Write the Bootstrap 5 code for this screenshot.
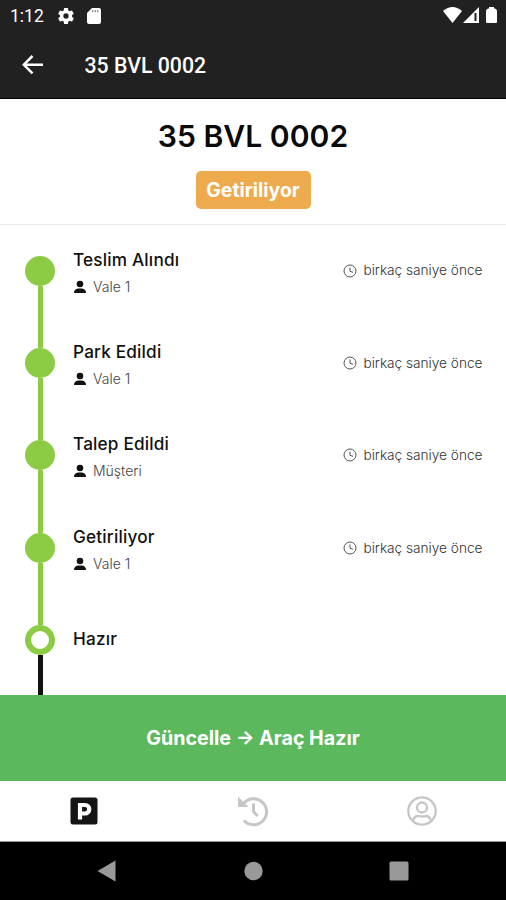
<!DOCTYPE html>
<html lang="tr">
<head>
<meta charset="utf-8">
<meta name="viewport" content="width=device-width, initial-scale=1">
<title>35 BVL 0002</title>
<link href="https://cdn.jsdelivr.net/npm/bootstrap@5.3.0/dist/css/bootstrap.min.css" rel="stylesheet">
<style>
body{font-family:Inter,"Noto Sans",sans-serif;color:#111;background:#fff}
svg{display:block;flex:none}
.screen{height:900px;overflow:hidden}
.app-head{height:98.5px;background:#212121;color:#fff;border-bottom:1px solid #000}
.status{height:32px;padding:0 8px 0 10px;font:400 17.5px/32px Roboto,sans-serif}
.status .gear{margin-left:12px}
.status .sd{margin-left:11px}
.title-row{height:66px;padding-left:20px}
.title-row h1{font:500 21.3px/66px Roboto,sans-serif;margin:1px 0 0 38.5px}
.plate{height:126px;border-bottom:1px solid #ebebeb;padding-top:18px}
.plate h2{font-size:30.1px;font-weight:600;line-height:38px;margin:0 0 16px;color:#0a0a0a}
.state{height:38px;line-height:39px;width:115px;border-radius:5px;background:#eeab4e;color:#fff;font-size:19.4px;font-weight:700}
.step{height:92.4px;padding:0 23.5px 0 25px}
.rail{width:30px}
.rail i{flex:1;width:5px;background:#8ccc44}
.rail i.none{background:none}
.rail i.todo,.tail i{background:#111}
.dot{width:30px;height:30px;border-radius:50%;background:#8ccc44}
.dot.open{background:#fff;border:6px solid #8ccc44}
.info{margin-left:18px;padding-top:3px}
.info.single{padding:0 0 2px}
.name{font-size:17.2px;letter-spacing:.18px;font-weight:500;line-height:22px}
.who{font-size:14px;font-weight:300;line-height:18px;margin-top:7px;color:#444}
.who svg{margin-right:6px}
.when{font-size:13.65px;font-weight:300;color:#333}
.when svg{margin-right:6px}
.tail{padding-left:37.5px}
.tail i{width:5px}
.update{height:86px;background:#5cb85c;color:#fff;font-size:19.65px;font-weight:700;border-radius:0}
.update span{padding-top:2px}
.tabs{height:61px;border-bottom:1px solid #999}
.sys{height:58px;background:#000;gap:126px}
</style>
<script src="https://cdn.jsdelivr.net/npm/bootstrap@5.3.0/dist/js/bootstrap.bundle.min.js"></script>
</head>
<body>
<div class="screen d-flex flex-column">
  <header class="app-head flex-shrink-0">
    <div class="status d-flex align-items-center">
      <span>1:12</span>
      <svg class="gear" width="20" height="20" viewBox="0 0 24 24" fill="#fff"><path d="M19.14 12.94a7 7 0 0 0 .06-.94 7 7 0 0 0-.07-.94l2.03-1.58a.5.5 0 0 0 .12-.61l-1.92-3.32a.5.5 0 0 0-.59-.22l-2.39.96a7 7 0 0 0-1.62-.94l-.36-2.54a.5.5 0 0 0-.48-.41h-3.84a.5.5 0 0 0-.47.41l-.36 2.54a7 7 0 0 0-1.62.94l-2.39-.96a.5.5 0 0 0-.59.22L2.74 8.87a.5.5 0 0 0 .12.61l2.03 1.58a7 7 0 0 0 0 1.88l-2.03 1.58a.5.5 0 0 0-.12.61l1.92 3.32c.12.22.37.29.59.22l2.39-.96c.5.38 1.03.7 1.62.94l.36 2.54c.05.24.24.41.48.41h3.84c.24 0 .44-.17.47-.41l.36-2.54a7 7 0 0 0 1.62-.94l2.39.96c.22.08.47 0 .59-.22l1.92-3.32a.5.5 0 0 0-.12-.61zM12 15.2a3.200 3.200 0 1 1 0-6.400 3.200 3.200 0 0 1 0 6.400z"/></svg>
      <svg class="sd" width="14" height="16" viewBox="0 0 14 16"><path fill="#fff" d="M5 0h7q2 0 2 2v12q0 2-2 2H2q-2 0-2-2V5z"/><path stroke="#888" stroke-width="1.2" d="M5.700 2v2.300M8.200 2v2.300M10.700 2v2.300"/></svg>
      <svg class="ms-auto" width="55" height="20" viewBox="0 0 55 20" fill="#fff"><path d="M0 5Q9.500-2.800 19 5L9.500 17z"/><path fill-rule="evenodd" d="M36 1v16H20zM31.5 7v8h2V7z"/><path d="M46 1h5v1.500h1q2 .5 2 2.500v11q0 1-1 1h-9q-1 0-1-1V5q0-2 2-2.500h1z"/></svg>
    </div>
    <div class="title-row d-flex align-items-center">
      <svg width="26" height="24" viewBox="0 0 26 24" fill="none" stroke="#fff" stroke-width="2.500"><path d="M12.500 3 3.800 11.700l8.700 8.700M3.800 11.700H23"/></svg>
      <h1>35 BVL 0002</h1>
    </div>
  </header>
  <section class="plate flex-shrink-0 d-flex flex-column align-items-center">
    <h2>35 BVL 0002</h2>
    <div class="state text-center">Getiriliyor</div>
  </section>
  <main class="flex-grow-1 d-flex flex-column overflow-hidden">
    <div class="step flex-shrink-0 d-flex align-items-center">
      <div class="rail h-100 d-flex flex-column align-items-center"><i class="none"></i><span class="dot"></span><i></i></div>
      <div class="info"><div class="name">Teslim Alındı</div><div class="who d-flex align-items-center"><svg width="14" height="14" viewBox="0 0 14 14" fill="#111"><circle cx="7" cy="4" r="3.300"/><path d="M1 13q0-4 4-4.500h4q4 .5 4 4.500z"/></svg>Vale 1</div></div>
      <div class="when ms-auto d-flex align-items-center"><svg width="14" height="14" viewBox="0 0 14 14" fill="none" stroke="#555"><circle cx="7" cy="7" r="6"/><path d="M7 3.500V7.300l3 1"/></svg>birkaç saniye önce</div>
    </div>
    <div class="step flex-shrink-0 d-flex align-items-center">
      <div class="rail h-100 d-flex flex-column align-items-center"><i></i><span class="dot"></span><i></i></div>
      <div class="info"><div class="name">Park Edildi</div><div class="who d-flex align-items-center"><svg width="14" height="14" viewBox="0 0 14 14" fill="#111"><circle cx="7" cy="4" r="3.300"/><path d="M1 13q0-4 4-4.500h4q4 .5 4 4.500z"/></svg>Vale 1</div></div>
      <div class="when ms-auto d-flex align-items-center"><svg width="14" height="14" viewBox="0 0 14 14" fill="none" stroke="#555"><circle cx="7" cy="7" r="6"/><path d="M7 3.500V7.300l3 1"/></svg>birkaç saniye önce</div>
    </div>
    <div class="step flex-shrink-0 d-flex align-items-center">
      <div class="rail h-100 d-flex flex-column align-items-center"><i></i><span class="dot"></span><i></i></div>
      <div class="info"><div class="name">Talep Edildi</div><div class="who d-flex align-items-center"><svg width="14" height="14" viewBox="0 0 14 14" fill="#111"><circle cx="7" cy="4" r="3.300"/><path d="M1 13q0-4 4-4.500h4q4 .5 4 4.500z"/></svg>Müşteri</div></div>
      <div class="when ms-auto d-flex align-items-center"><svg width="14" height="14" viewBox="0 0 14 14" fill="none" stroke="#555"><circle cx="7" cy="7" r="6"/><path d="M7 3.500V7.300l3 1"/></svg>birkaç saniye önce</div>
    </div>
    <div class="step flex-shrink-0 d-flex align-items-center">
      <div class="rail h-100 d-flex flex-column align-items-center"><i></i><span class="dot"></span><i></i></div>
      <div class="info"><div class="name">Getiriliyor</div><div class="who d-flex align-items-center"><svg width="14" height="14" viewBox="0 0 14 14" fill="#111"><circle cx="7" cy="4" r="3.300"/><path d="M1 13q0-4 4-4.500h4q4 .5 4 4.500z"/></svg>Vale 1</div></div>
      <div class="when ms-auto d-flex align-items-center"><svg width="14" height="14" viewBox="0 0 14 14" fill="none" stroke="#555"><circle cx="7" cy="7" r="6"/><path d="M7 3.500V7.300l3 1"/></svg>birkaç saniye önce</div>
    </div>
    <div class="step flex-shrink-0 d-flex align-items-center">
      <div class="rail h-100 d-flex flex-column align-items-center"><i></i><span class="dot open"></span><i class="todo"></i></div>
      <div class="info single"><div class="name">Hazır</div></div>
    </div>
    <div class="tail flex-grow-1 d-flex"><i></i></div>
  </main>
  <button class="update btn border-0 p-0 w-100 flex-shrink-0 d-flex align-items-center justify-content-center"><span>Güncelle → Araç Hazır</span></button>
  <nav class="tabs row g-0 flex-shrink-0 align-items-center">
    <div class="col d-flex justify-content-center"><svg width="28" height="28" viewBox="0 0 28 28"><rect x=".5" y=".5" width="27" height="27" rx="2.500" fill="#151515"/><path fill="none" stroke="#fff" stroke-width="4.200" d="M10 22.500V8h5a4 4 0 0 1 0 8.500h-5"/></svg></div>
    <div class="col d-flex justify-content-center"><svg width="32" height="32" viewBox="0 0 32 32" fill="none" stroke="#c6c6c6" stroke-width="3"><path d="M6.500 8.500A13 13 0 1 1 7 25.500"/><path fill="#c6c6c6" stroke="none" d="M1 1.500v10.500h10.500z"/><path d="M16.500 8.500v8l4 4.500"/></svg></div>
    <div class="col d-flex justify-content-center"><svg width="30" height="30" viewBox="0 0 30 30" fill="none" stroke="#c6c6c6" stroke-width="2.300"><circle cx="15" cy="15" r="13.700"/><circle cx="15" cy="11.500" r="5"/><path d="M6 24.500q1.500-4.500 5-4.500 4 1 8 0 3.500 0 5 4.500"/></svg></div>
  </nav>
  <footer class="sys d-flex align-items-center justify-content-center flex-shrink-0">
    <svg width="20" height="22" viewBox="0 0 20 22"><path fill="#999" d="M18.500.5v21L.5 11z"/></svg>
    <svg width="20" height="20" viewBox="0 0 20 20"><circle cx="10.500" cy="10" r="9.200" fill="#999"/></svg>
    <svg width="20" height="20" viewBox="0 0 20 20"><rect x=".5" y=".5" width="19" height="19" rx="1.500" fill="#999"/></svg>
  </footer>
</div>
</body>
</html>
